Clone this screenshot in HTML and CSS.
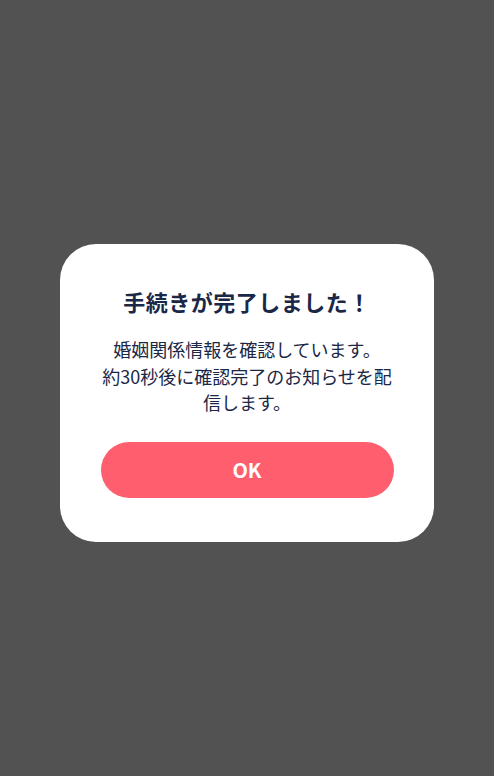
FILE: index.html
```html
<!DOCTYPE html>
<html lang="ja">
<head>
<meta charset="utf-8">
<link rel="stylesheet" href="styles.css">
</head>
<body>
<div class="overlay">
  <div class="dialog">
    <h1 class="title">手続きが完了しました！</h1>
    <p class="message">婚姻関係情報を確認しています。<br>約30秒後に確認完了のお知らせを配信します。</p>
    <button class="ok">OK</button>
  </div>
</div>
</body>
</html>
```
FILE: styles.css
```css
html, body {
  margin: 0;
  padding: 0;
  height: 100%;
}
body {
  background: #525252;
  font-family: "Noto Sans CJK JP", "Noto Sans", sans-serif;
}
.overlay {
  height: 776px;
  box-sizing: border-box;
  padding-top: 10px;
  display: flex;
  align-items: center;
  justify-content: center;
}
.dialog {
  width: 374px;
  box-sizing: border-box;
  background: #ffffff;
  border-radius: 36px;
  padding: 41px 41px 44px;
  display: flex;
  flex-direction: column;
  align-items: center;
}
.title {
  margin: 0;
  font-size: 22px;
  font-weight: 700;
  line-height: 33px;
  color: #1b2746;
  letter-spacing: 0.5px;
  text-align: center;
}
.message {
  margin: 18px 0 0;
  font-size: 18px;
  line-height: 26.5px;
  color: #1b2746;
  text-align: center;
}
.ok {
  margin-top: 26px;
  width: 293px;
  height: 56px;
  border: none;
  border-radius: 28px;
  background: #ff5e6e;
  color: #ffffff;
  font-family: "Noto Sans CJK JP", "Noto Sans", sans-serif;
  font-size: 20px;
  font-weight: 700;
  padding: 0;
}
```
